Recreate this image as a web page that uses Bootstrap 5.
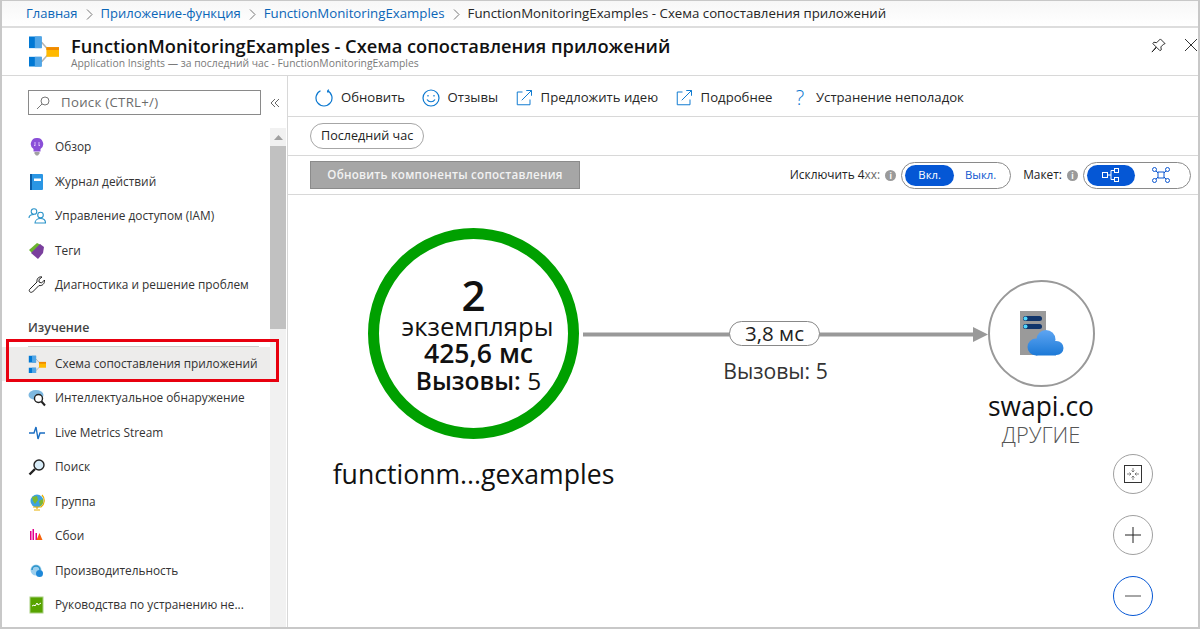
<!DOCTYPE html>
<html lang="ru">
<head>
    <meta charset="UTF-8">
    <meta name="viewport" content="width=device-width, initial-scale=1.0">
    <title>FunctionMonitoringExamples - Схема сопоставления приложений</title>
    <link href="https://cdn.jsdelivr.net/npm/bootstrap@5.3.0/dist/css/bootstrap.min.css" rel="stylesheet">
    <style>
        html, body { height: 100%; overflow: hidden; }
        body { font-family: "Open Sans", "Noto Sans", sans-serif; font-size: 12px; color: #262626; background: #fff; }
        .frame { width: 1200px; height: 629px; border: solid #c8c8c8; border-width: 1px 2px 2px 2px; overflow: hidden; }

        /* breadcrumbs */
        .crumbs { height: 27px; padding: 1px 0 0 24px; border-bottom: 2px solid #ddd; background: linear-gradient(#f7f7f7, #fff); font-size: 13.25px; flex: none; white-space: nowrap; }
        .crumbs a { color: #0b66b8; text-decoration: none; }
        .crumbs a.crumb-ru { font-size: 13px; }
        .crumbs .sep { width: 7px; height: 11px; margin: 0 8px; }

        /* blade header */
        .blade-head { height: 48px; flex: none; border-bottom: 1px solid #d8d8d8; padding-left: 27px; position: relative; }
        .blade-names { padding-top: 2px; }
        .blade-title { font-size: 18.25px; font-weight: 600; color: #111; line-height: 22px; margin: 0; white-space: nowrap; }
        .blade-sub { font-size: 10.35px; color: #7a7a7a; line-height: 13px; }
        .head-tools { position: absolute; right: 0; top: 10px; gap: 18px; }

        /* left menu */
        .side { width: 286px; flex: none; border-right: 1px solid #d8d8d8; position: relative; }
        .side-search { height: 52px; padding: 14px 0 0 26px; }
        .search-box { width: 233px; height: 25px; border: 1px solid #8a8a8a; padding-left: 7px; gap: 11px; color: #6b6b6b; font-size: 13.2px; letter-spacing: .3px; }
        .collapse-btn { margin-left: 9px; }
        .side-body { height: 499px; overflow: hidden; }
        .side-list { width: 268px; margin: 0; padding: 2px 0 0; list-style: none; }
        .side-link { height: 34.5px; padding-left: 26px; color: #333; text-decoration: none; white-space: nowrap; font-size: 11.85px; }
        .side-link.is-active { background: #edeceb; }
        .side-ico { width: 18px; height: 18px; margin-right: 9px; flex: none; }
        .side-group { height: 28px; margin: 16px 0 0 26px; width: 231px; border-bottom: 1px solid #ccc; color: #444; font-size: 12.4px; font-weight: 600; }
        .fake-scroll { width: 16px; flex: none; background: #f1f1f1; }
        .scroll-up { height: 18px; }
        .scroll-thumb { height: 183px; background: #c1c1c1; }
        .red-mark { position: absolute; left: 4px; top: 263px; width: 273px; height: 43px; border: 3px solid #e8000f; pointer-events: none; }

        /* command rows */
        .cmd-row { height: 41px; flex: none; border-bottom: 1px solid #d8d8d8; padding: 4px 0 0 27px; }
        .cmd-btn { color: #262626; text-decoration: none; white-space: nowrap; font-size: 13.15px; gap: 8px; margin-right: 16.5px; }
        .help-mark { width: 16px; margin-left: 3px; text-align: center; color: #0b78d0; font-size: 20px; font-weight: 300; line-height: 18px; }
        .time-row { height: 39px; flex: none; border-bottom: 1px solid #d8d8d8; padding-left: 22px; }
        .time-pill { border: 1px solid #a6a6a6; border-radius: 13px; height: 26px; padding: 0 10px; color: #222; font-size: 12.6px; }
        .opt-row { height: 39px; flex: none; border-bottom: 1px solid #d8d8d8; padding: 0 7px 0 22px; }
        .refresh-btn { width: 270px; height: 28px; background: #a6a6a6; border: 1px solid #8b8b8b; border-radius: 0; color: #f2f2f2; font-size: 11.6px; font-weight: 600; letter-spacing: .25px; padding: 0; white-space: nowrap; }
        .opt-label { font-size: 11.9px; color: #222; white-space: nowrap; }
        .opt-label i { font-style: normal; color: #666; }
        .info-dot { width: 11px; height: 11px; border-radius: 50%; background: #9a9a9a; color: #fff; font-size: 8px; font-weight: 700; margin: 0 5px; line-height: 11px; text-align: center; flex: none; }
        .toggle-box { height: 27px; border: 1px solid #8a8a8a; border-radius: 14px; padding: 0 3px; }
        .toggle-item { height: 21px; border-radius: 11px; color: #0b56d0; font-size: 11.3px; }
        .toggle-item.is-on { background: #0557d5; color: #fff; }
        .w-on { width: 49px; }
        .w-off { width: 53px; }
        .w-tree { width: 48px; }
        .w-net { width: 52px; }

        /* map canvas */
        .map-canvas { position: relative; flex: 1 1 auto; overflow: hidden; }
        .map-line { position: absolute; left: 0; top: 0; }
        .map-node { position: absolute; border-radius: 50%; background: #fff; text-align: center; color: #111; }
        .node-main { left: 80px; top: 33px; width: 211px; height: 211px; border: 11px solid #00a000; }
        .node-text { padding-left: 10px; }
        .node-main .num { font-size: 42px; font-weight: 600; line-height: 40px; margin-top: 36px; }
        .node-main .inst { font-size: 25.7px; line-height: 26px; margin-top: -1px; padding-right: 2px; }
        .node-main .dur { font-size: 26.6px; font-weight: 600; line-height: 26px; }
        .node-main .calls { font-size: 24.5px; line-height: 26px; margin-top: 2px; }
        .map-label { position: absolute; text-align: center; color: #111; white-space: nowrap; }
        .main-name { left: 0; width: 371px; top: 261px; font-size: 26.6px; line-height: 36px; }
        .edge-pill { position: absolute; left: 441px; top: 126px; width: 91px; height: 25px; background: #fff; border: 1px solid #888; border-radius: 13px; font-size: 20.5px; line-height: 23px; text-align: center; color: #222; }
        .edge-calls { left: 416px; width: 143px; top: 161px; font-size: 21.2px; line-height: 30px; color: #333; }
        .node-ext { left: 700px; top: 85px; width: 107px; height: 107px; border: 2px solid #999; }
        .ext-name { left: 673px; width: 160px; top: 193px; font-size: 26.4px; line-height: 36px; }
        .ext-kind { left: 673px; width: 160px; top: 227px; font-size: 21.8px; font-weight: 300; line-height: 26px; color: #555; }
        .zoom-stack { position: absolute; left: 825px; top: 259px; gap: 21px; }
        .zoom-btn { width: 40px; height: 40px; border: 1px solid #a0a0a0; border-radius: 50%; background: #fff; padding: 0; }
        .zoom-btn.is-focus { border-color: #0557d5; }
    </style>
</head>
<body>
    <svg width="0" height="0" class="position-absolute">
        <defs>
            <linearGradient id="cloud-fill" gradientUnits="userSpaceOnUse" x1="0" y1="19" x2="0" y2="45">
                <stop offset="0" stop-color="#5ea5f2"/><stop offset="1" stop-color="#1a78d6"/>
            </linearGradient>
        </defs>
        <symbol id="ico-map" viewBox="0 0 31 31">
            <path d="M13 6l8 9M13 26l8-9" stroke="#b5b5b5" stroke-width="1.6" fill="none"/>
            <rect x="0" y="0" width="13" height="12" fill="#0078d4"/><rect x="6" y="0" width="7" height="12" fill="#50a5e6"/>
            <rect x="0" y="21" width="13" height="10" fill="#0078d4"/><rect x="6" y="21" width="7" height="10" fill="#50a5e6"/>
            <rect x="18" y="11" width="13" height="10" fill="#ffb900"/><rect x="18" y="11" width="13" height="3" fill="#f08a00"/>
        </symbol>
        <symbol id="ico-ext" viewBox="0 0 24 24">
            <path d="M10 4H3v17h17v-7" fill="none" stroke="#0b78d0" stroke-width="1.3"/>
            <path d="M9 15L22 2M15 2h7v7" fill="none" stroke="#0b78d0" stroke-width="1.3"/>
        </symbol>
    </svg>

    <div class="frame d-flex flex-column">
        <nav class="crumbs d-flex align-items-center">
            <a class="crumb-ru" href="#">Главная</a>
            <svg class="sep" viewBox="0 0 7 11"><path d="M1 .5l5 5-5 5" fill="none" stroke="#777"/></svg>
            <a class="crumb-ru" href="#">Приложение-функция</a>
            <svg class="sep" viewBox="0 0 7 11"><path d="M1 .5l5 5-5 5" fill="none" stroke="#777"/></svg>
            <a href="#">FunctionMonitoringExamples</a>
            <svg class="sep" viewBox="0 0 7 11"><path d="M1 .5l5 5-5 5" fill="none" stroke="#777"/></svg>
            <span>FunctionMonitoringExamples - Схема сопоставления приложений</span>
        </nav>

        <header class="blade-head d-flex align-items-center">
            <svg width="30" height="31" class="me-2 flex-none"><use href="#ico-map"/></svg>
            <div class="blade-names ms-1">
                <h1 class="blade-title">FunctionMonitoringExamples - Схема сопоставления приложений</h1>
                <div class="blade-sub">Application Insights — за последний час - FunctionMonitoringExamples</div>
            </div>
            <div class="head-tools d-flex">
                <svg width="15" height="15" viewBox="0 0 16 16"><path d="M10 1l5 5-1.500.5-3 3 .5 3-1.500 1L6 10l-5 5 4.500-5.500L2 6l1-1.500 3 .5 3-3z" fill="none" stroke="#222"/></svg>
                <svg width="14" height="14" viewBox="0 0 14 14"><path d="M1 1l12 12M13 1L1 13" stroke="#333"/></svg>
            </div>
        </header>

        <div class="d-flex flex-grow-1 overflow-hidden">
            <aside class="side">
                <div class="side-search d-flex">
                    <div class="search-box d-flex align-items-center">
                        <svg width="14" height="14" viewBox="0 0 14 14"><circle cx="9" cy="5" r="4" fill="none" stroke="#777"/><path d="M6 8l-5 5" stroke="#777"/></svg>
                        <span>Поиск (CTRL+/)</span>
                    </div>
                    <svg class="collapse-btn mt-2" width="10" height="10" viewBox="0 0 10 10"><path d="M5 1L1 5l4 4M9 1L5 5l4 4" fill="none" stroke="#666"/></svg>
                </div>
                <div class="side-body d-flex">
                    <ul class="side-list">
                        <li><a class="side-link d-flex align-items-center" href="#">
                            <svg class="side-ico" viewBox="0 0 18 18"><path d="M9 0a6 6 0 0 1 3.500 11v2.500h-7V11A6 6 0 0 1 9 0z" fill="#8a4fd8"/><path d="M6.500 14h5v1.500L10 17.500H8l-1.500-2z" fill="#a0a0a0"/><path d="M7 4v4l-1-1M11 4v4l1-1" fill="none" stroke="#e8d8ff" stroke-width=".8"/></svg>
                            Обзор</a></li>
                        <li><a class="side-link d-flex align-items-center" href="#">
                            <svg class="side-ico" viewBox="0 0 18 18"><rect x="2" y="1" width="13" height="16" rx="1" fill="#2a96e4"/><rect x="2" y="1" width="2" height="16" fill="#0b5ea8"/><rect x="6" y="5.500" width="7" height="2.500" fill="#fff"/></svg>
                            Журнал действий</a></li>
                        <li><a class="side-link d-flex align-items-center" href="#">
                            <svg class="side-ico" viewBox="0 0 18 18" fill="none" stroke="#2a93c9" stroke-width="1.100"><circle cx="6" cy="4.500" r="2.800"/><path d="M1 11c0-2 2-3.500 5-3.500"/><circle cx="12.500" cy="8" r="2.800"/><path d="M7 16c0-2.500 2.300-4.500 5.500-4.500s5 2 5 4.500z"/></svg>
                            Управление доступом (IAM)</a></li>
                        <li><a class="side-link d-flex align-items-center" href="#">
                            <svg class="side-ico" viewBox="0 0 18 18"><path d="M1 8l8-7 4 2-8 9z" fill="#6bb52e"/><path d="M3 11l9-9 4 3-1 6-5 6z" fill="#7a3f9d"/></svg>
                            Теги</a></li>
                        <li><a class="side-link d-flex align-items-center" href="#">
                            <svg class="side-ico" viewBox="0 0 18 18"><path d="M16.500 4l-3 3-2.500-1V3.500l3-2.500c-3-.7-5.500 1.500-5 5L1.500 13.500c-1 2 1 3.500 3 2.500L11 9.500c3 .8 6-2 5.500-5.500z" fill="none" stroke="#222"/></svg>
                            Диагностика и решение проблем</a></li>
                        <li class="side-group d-flex align-items-start">Изучение</li>
                        <li><a class="side-link is-active d-flex align-items-center" href="#">
                            <svg class="side-ico" viewBox="-1 -1 33 33"><use href="#ico-map"/></svg>
                            Схема сопоставления приложений</a></li>
                        <li><a class="side-link d-flex align-items-center" href="#">
                            <svg class="side-ico" viewBox="0 0 18 18"><ellipse cx="8" cy="6" rx="7.500" ry="5" fill="#7db8e0"/><circle cx="10.500" cy="9.500" r="4" fill="#fff" stroke="#222" stroke-width="1.400"/><path d="M13.500 12.500l3.500 4" stroke="#222" stroke-width="2"/></svg>
                            Интеллектуальное обнаружение</a></li>
                        <li><a class="side-link d-flex align-items-center" href="#">
                            <svg class="side-ico" viewBox="0 0 18 18"><path d="M1 9h5l2-6 2 12 2-6h5" fill="none" stroke="#1b6ec2" stroke-width="1.400"/></svg>
                            Live Metrics Stream</a></li>
                        <li><a class="side-link d-flex align-items-center" href="#">
                            <svg class="side-ico" viewBox="0 0 18 18"><circle cx="11" cy="7" r="5" fill="#d8ecf8" stroke="#222" stroke-width="1.400"/><path d="M7 11l-5.500 5.500" stroke="#222" stroke-width="2.400"/></svg>
                            Поиск</a></li>
                        <li><a class="side-link d-flex align-items-center" href="#">
                            <svg class="side-ico" viewBox="0 0 18 18"><circle cx="9" cy="8" r="6.500" fill="#3ea2e0"/><path d="M4 4l5-1 1 4-3 4-2-3zM11 8l4-2 0 4-3 3z" fill="#7cb82f"/><path d="M14 2a8 8 0 0 1-1 12H5M9 14v2M6 17h6" fill="none" stroke="#e8b000" stroke-width="1.200"/></svg>
                            Группа</a></li>
                        <li><a class="side-link d-flex align-items-center" href="#">
                            <svg class="side-ico" viewBox="0 0 18 18"><path d="M2 4h1.500v9H2zM4.500 2H6v11H4.500zM7.500 6H9v7H7.500z" fill="#e3008c"/><path d="M11.500 6l3 7h-6z" fill="#f7630c"/></svg>
                            Сбои</a></li>
                        <li><a class="side-link d-flex align-items-center" href="#">
                            <svg class="side-ico" viewBox="0 0 18 18"><circle cx="8" cy="8" r="5.500" fill="#9ccfee"/><path d="M4 8a4 4 0 0 1 8 0" fill="none" stroke="#2a93c9" stroke-width="1.500"/><circle cx="11.500" cy="11.500" r="3.500" fill="#1e88d8"/></svg>
                            Производительность</a></li>
                        <li><a class="side-link d-flex align-items-center" href="#">
                            <svg class="side-ico" viewBox="0 0 18 18"><rect x="2" y="1" width="13" height="16" fill="#57a300"/><rect x="2" y="1" width="13" height="16" fill="none" stroke="#a8d080"/><path d="M4 10l2-1 1 1 2-3 1 2 3-2" fill="none" stroke="#fff"/></svg>
                            Руководства по устранению не...</a></li>
                    </ul>
                    <div class="fake-scroll">
                        <div class="scroll-up d-flex align-items-center justify-content-center">
                            <svg width="9" height="5" viewBox="0 0 9 5"><path d="M4.500 0L9 5H0z" fill="#a0a0a0"/></svg>
                        </div>
                        <div class="scroll-thumb"></div>
                    </div>
                </div>
                <div class="red-mark"></div>
            </aside>

            <main class="d-flex flex-column flex-grow-1">
                <div class="cmd-row d-flex align-items-center">
                    <a class="cmd-btn d-flex align-items-center" href="#">
                        <svg width="18" height="18" viewBox="0 0 18 18" fill="none" stroke="#0b78d0" stroke-width="1.200"><path d="M5.500 1.800a8 8 0 1 0 7 0"/><path d="M12.500 1.800l1.500-1M12.500 1.800l.5 1.800"/></svg>
                        Обновить</a>
                    <a class="cmd-btn d-flex align-items-center" href="#">
                        <svg width="18" height="18" viewBox="0 0 18 18" fill="none" stroke="#0b78d0" stroke-width="1.200"><circle cx="9" cy="9" r="8"/><path d="M5 10.500c2 3 6 3 8 0"/><path d="M6 6v1.500M12 6v1.500"/></svg>
                        Отзывы</a>
                    <a class="cmd-btn d-flex align-items-center" href="#">
                        <svg width="18" height="18"><use href="#ico-ext"/></svg>
                        Предложить идею</a>
                    <a class="cmd-btn d-flex align-items-center" href="#">
                        <svg width="18" height="18"><use href="#ico-ext"/></svg>
                        Подробнее</a>
                    <a class="cmd-btn d-flex align-items-center" href="#">
                        <span class="help-mark">?</span>
                        Устранение неполадок</a>
                </div>
                <div class="time-row d-flex align-items-center">
                    <span class="time-pill d-flex align-items-center">Последний час</span>
                </div>
                <div class="opt-row d-flex align-items-center">
                    <button class="btn refresh-btn" type="button">Обновить компоненты сопоставления</button>
                    <div class="ms-auto d-flex align-items-center">
                        <span class="opt-label">Исключить 4<i>xx:</i></span>
                        <span class="info-dot">i</span>
                        <div class="toggle-box d-flex align-items-center me-2">
                            <span class="toggle-item w-on is-on d-flex align-items-center justify-content-center">Вкл.</span>
                            <span class="toggle-item w-off d-flex align-items-center justify-content-center">Выкл.</span>
                        </div>
                        <span class="opt-label ms-1">Макет:</span>
                        <span class="info-dot">i</span>
                        <div class="toggle-box d-flex align-items-center">
                            <span class="toggle-item w-tree is-on d-flex align-items-center justify-content-center">
                                <svg width="18" height="14" viewBox="0 0 18 14" fill="none" stroke="#fff"><rect x=".5" y="4.500" width="5" height="5"/><rect x="12.500" y=".5" width="4" height="4"/><rect x="12.500" y="9.500" width="4" height="4"/><path d="M6 7h3M12 2.500H9v9h3"/></svg>
                            </span>
                            <span class="toggle-item w-net d-flex align-items-center justify-content-center">
                                <svg width="18" height="16" viewBox="0 0 18 16" fill="none" stroke="#0b56d0"><rect x="6" y="5" width="6" height="6"/><circle cx="2.500" cy="2.500" r="2"/><circle cx="15.500" cy="2.500" r="2"/><circle cx="2.500" cy="13.500" r="2"/><circle cx="15.500" cy="13.500" r="2"/><path d="M4 4l2 2M14 4l-2 2M4 12l2-2M14 12l-2-2"/></svg>
                            </span>
                        </div>
                    </div>
                </div>

                <section class="map-canvas">
                    <svg class="map-line" width="910" height="300">
                        <path d="M295 139.500H690" stroke="#999" stroke-width="4"/>
                        <path d="M685 132l15 7.500-15 7.500z" fill="#999"/>
                    </svg>
                    <div class="map-node node-main">
                        <div class="num">2</div>
                        <div class="node-text">
                            <div class="inst">экземпляры</div>
                            <div class="dur">425,6 мс</div>
                            <div class="calls"><b class="fw-semibold">Вызовы:</b> 5</div>
                        </div>
                    </div>
                    <div class="map-label main-name">functionm...gexamples</div>
                    <div class="edge-pill">3,8 мс</div>
                    <div class="map-label edge-calls">Вызовы: 5</div>
                    <div class="map-node node-ext d-flex align-items-center justify-content-center">
                        <svg width="46" height="46" viewBox="0 0 46 46">
                            <rect x="1" y="0" width="26" height="44" fill="#9a9a9a"/>
                            <rect x="4" y="5" width="19" height="5" rx="2.500" fill="#10356b"/><circle cx="6.500" cy="7.500" r="2" fill="#50d8ff"/>
                            <rect x="4" y="13" width="19" height="5" rx="2.500" fill="#10356b"/><circle cx="6.500" cy="15.500" r="2" fill="#50d8ff"/>
                            <g fill="url(#cloud-fill)">
                                <circle cx="17" cy="36" r="8.500"/>
                                <circle cx="27" cy="28.500" r="9.500"/>
                                <circle cx="37.500" cy="37" r="7"/>
                                <rect x="17" y="30" width="20" height="14.500"/>
                            </g>
                        </svg>
                    </div>
                    <div class="map-label ext-name">swapi.co</div>
                    <div class="map-label ext-kind">ДРУГИЕ</div>
                    <div class="zoom-stack d-flex flex-column">
                        <button class="zoom-btn d-flex align-items-center justify-content-center" type="button">
                            <svg width="18" height="18" viewBox="0 0 18 18" fill="none" stroke="#333"><rect x=".5" y=".5" width="17" height="17"/><path d="M9 3v4M7.500 5.500L9 7l1.500-1.500M9 15v-4M7.500 12.500L9 11l1.500 1.500M3 9h4M5.500 7.500L7 9l-1.500 1.500M15 9h-4M12.500 7.500L11 9l1.500 1.500" stroke="#666" stroke-width=".8"/></svg>
                        </button>
                        <button class="zoom-btn d-flex align-items-center justify-content-center" type="button">
                            <svg width="16" height="16" viewBox="0 0 16 16"><path d="M8 0v16M0 8h16" stroke="#222"/></svg>
                        </button>
                        <button class="zoom-btn is-focus d-flex align-items-center justify-content-center" type="button">
                            <svg width="16" height="2" viewBox="0 0 16 2"><path d="M0 1h16" stroke="#888" stroke-width="1.500"/></svg>
                        </button>
                    </div>
                </section>
            </main>
        </div>
    </div>

    <script src="https://cdn.jsdelivr.net/npm/bootstrap@5.3.0/dist/js/bootstrap.bundle.min.js"></script>
</body>
</html>
